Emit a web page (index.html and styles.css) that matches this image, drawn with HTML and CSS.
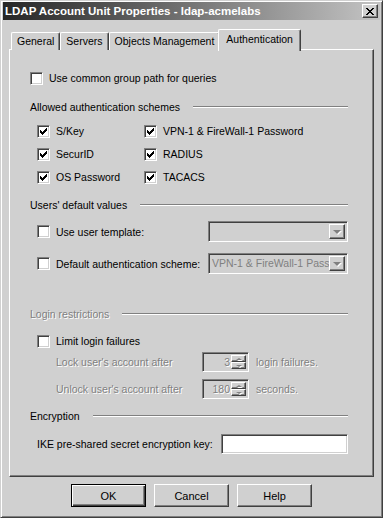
FILE: index.html
```html
<!DOCTYPE html>
<html lang="en">
<head>
    <meta charset="UTF-8">
    <title>LDAP Account Unit Properties - ldap-acmelabs</title>
    <link rel="stylesheet" href="styles.css">
</head>
<body>
    <div class="window">
        <div class="titlebar">
            <span class="title">LDAP Account Unit Properties - ldap-acmelabs</span>
            <span class="close-btn">
                <svg width="8" height="7" viewBox="0 0 8 7"><path d="M0 0h2v1h-2zM6 0h2v1h-2zM1 1h2v1h-2zM5 1h2v1h-2zM2 2h4v1h-4zM3 3h2v1h-2zM2 4h4v1h-4zM1 5h2v1h-2zM5 5h2v1h-2zM0 6h2v1h-2zM6 6h2v1h-2z" fill="#000"/></svg>
            </span>
        </div>

        <div class="content">
            <div class="tabs">
                <div class="tab">General</div>
                <div class="tab">Servers</div>
                <div class="tab">Objects Management</div>
                <div class="tab active">Authentication</div>
            </div>

            <div class="panel">
                <label class="check row-common">
                    <span class="box"></span>
                    <span>Use common group path for queries</span>
                </label>

                <div class="group-head head-allowed">
                    <span>Allowed authentication schemes</span>
                    <span class="etch"></span>
                </div>
                <div class="schemes">
                    <label class="check"><span class="box checked"></span><span>S/Key</span></label>
                    <label class="check"><span class="box checked"></span><span>VPN-1 &amp; FireWall-1 Password</span></label>
                    <label class="check"><span class="box checked"></span><span>SecurID</span></label>
                    <label class="check"><span class="box checked"></span><span>RADIUS</span></label>
                    <label class="check"><span class="box checked"></span><span>OS Password</span></label>
                    <label class="check"><span class="box checked"></span><span>TACACS</span></label>
                </div>

                <div class="group-head head-users">
                    <span>Users' default values</span>
                    <span class="etch"></span>
                </div>
                <div class="field-row row-template">
                    <label class="check"><span class="box"></span><span>Use user template:</span></label>
                    <div class="combo">
                        <span class="combo-text"></span>
                        <span class="combo-btn"><span class="arrow-down"></span></span>
                    </div>
                </div>
                <div class="field-row row-scheme">
                    <label class="check"><span class="box"></span><span>Default authentication scheme:</span></label>
                    <div class="combo">
                        <span class="combo-text">VPN-1 &amp; FireWall-1 Pass</span>
                        <span class="combo-btn"><span class="arrow-down"></span></span>
                    </div>
                </div>

                <div class="group-head head-login disabled">
                    <span>Login restrictions</span>
                    <span class="etch"></span>
                </div>
                <label class="check row-limit"><span class="box"></span><span>Limit login failures</span></label>
                <div class="spin-row row-lock disabled">
                    <span>Lock user's account after</span>
                    <div class="spin">
                        <span class="spin-value">3</span>
                        <span class="spin-btns">
                            <span class="spin-btn"><span class="arrow-up"></span></span>
                            <span class="spin-btn"><span class="arrow-down small"></span></span>
                        </span>
                    </div>
                    <span>login failures.</span>
                </div>
                <div class="spin-row row-unlock disabled">
                    <span>Unlock user's account after</span>
                    <div class="spin">
                        <span class="spin-value">180</span>
                        <span class="spin-btns">
                            <span class="spin-btn"><span class="arrow-up"></span></span>
                            <span class="spin-btn"><span class="arrow-down small"></span></span>
                        </span>
                    </div>
                    <span>seconds.</span>
                </div>

                <div class="group-head head-enc">
                    <span>Encryption</span>
                    <span class="etch"></span>
                </div>
                <div class="field-row row-ike">
                    <span class="ike-label">IKE pre-shared secret encryption key:</span>
                    <input type="text" class="textbox">
                </div>
            </div>

            <div class="buttons">
                <button type="button" class="btn default">OK</button>
                <button type="button" class="btn">Cancel</button>
                <button type="button" class="btn">Help</button>
            </div>
        </div>
    </div>
</body>
</html>
```

FILE: styles.css
```css
* {
    margin: 0;
    padding: 0;
    box-sizing: border-box;
}

body {
    font-family: "Liberation Sans", Arial, sans-serif;
    font-size: 10.5px;
    color: #000;
    background: #d0d0d0;
}

.window {
    width: 383px;
    height: 518px;
    background: #d0d0d0;
    border: 1px solid;
    border-color: #d0d0d0 #404040 #404040 #d0d0d0;
    box-shadow: inset 1px 1px #fff, inset -1px -1px #808080;
    padding: 1px 2px 2px 2px;
}

/* title bar */
.titlebar {
    height: 18px;
    display: flex;
    align-items: center;
    justify-content: space-between;
    padding: 0 2px 0 2px;
    background: linear-gradient(to right, #262626, #c4c4c4);
}

.title {
    color: #fff;
    font-weight: bold;
    font-size: 11.5px;
}

.close-btn {
    width: 16px;
    height: 14px;
    display: flex;
    align-items: center;
    justify-content: center;
    background: #d0d0d0;
    border: 1px solid;
    border-color: #fff #404040 #404040 #fff;
    box-shadow: inset -1px -1px #808080;
    padding-right: 1px;
}

.content {
    padding: 9px 6px 0 6px;
}

/* tabs */
.tabs {
    display: flex;
    align-items: flex-end;
    height: 21px;
    padding-left: 2px;
    position: relative;
    z-index: 1;
}

.tab {
    height: 18px;
    padding: 2px 5px 0 5px;
    border: 1px solid;
    border-bottom: none;
    border-color: #fff #404040 #404040 #fff;
    border-radius: 2px 2px 0 0;
    box-shadow: inset -1px 0 #808080;
    background: #d0d0d0;
    white-space: nowrap;
}

.tab.active {
    height: 22px;
    margin: 0 -2px -1px -2px;
    padding: 3px 7px 0 7px;
    position: relative;
}

.panel {
    height: 428px;
    margin-top: -1px;
    border: 1px solid;
    border-color: #fff #404040 #404040 #fff;
    box-shadow: inset -1px -1px #808080;
    padding: 18px 25px 0 20px;
    display: flex;
    flex-direction: column;
}

/* checkboxes */
.check {
    display: flex;
    align-items: center;
    gap: 6px;
    height: 20px;
    white-space: nowrap;
}

.box {
    width: 13px;
    height: 13px;
    flex: none;
    background: #fff;
    border: 1px solid;
    border-color: #808080 #fff #fff #808080;
    box-shadow: inset 1px 1px #404040, inset -1px -1px #d0d0d0;
}

.box.checked {
    background: #fff url("data:image/svg+xml,%3Csvg xmlns='http://www.w3.org/2000/svg' width='7' height='7' viewBox='0 0 7 7'%3E%3Cpath d='M6 0h1v1h-1zM5 1h2v1h-2zM0 2h1v1h-1zM4 2h3v1h-3zM0 3h2v1h-2zM3 3h3v1h-3zM0 4h5v1h-5zM1 5h3v1h-3zM2 6h1v1h-1z' fill='%23000'/%3E%3C/svg%3E") no-repeat 2px 2px;
}

/* group headings */
.group-head {
    display: flex;
    align-items: center;
    height: 20px;
    gap: 13px;
    white-space: nowrap;
}

.etch {
    flex: 1;
    height: 2px;
    border-top: 1px solid #808080;
    border-bottom: 1px solid #fff;
}

.disabled {
    color: #808080;
    text-shadow: 1px 1px #fff;
}

.head-allowed { margin-top: 9px; }
.head-users { margin-top: 8px; }
.head-login { margin-top: 30px; }
.head-enc { margin-top: 7px; }

.schemes {
    margin-top: 4px;
    margin-left: 7px;
    display: grid;
    grid-template-columns: 107px auto;
    row-gap: 3px;
}

/* combo rows */
.field-row {
    display: flex;
    align-items: center;
    justify-content: space-between;
    margin-left: 7px;
    white-space: nowrap;
}

.row-template { margin-top: 6px; height: 21px; }
.row-scheme { margin-top: 11px; height: 21px; }

.combo {
    width: 140px;
    height: 21px;
    display: flex;
    border: 1px solid;
    border-color: #808080 #fff #fff #808080;
    box-shadow: inset 1px 1px #404040, inset -1px -1px #d0d0d0;
    padding: 2px;
    background: #d0d0d0;
}

.combo-text {
    flex: 1;
    white-space: nowrap;
    color: #808080;
    padding-left: 1px;
    line-height: 15px;
}

.combo-btn {
    width: 16px;
    height: 15px;
    flex: none;
    display: flex;
    align-items: center;
    justify-content: center;
    border: 1px solid;
    border-color: #fff #404040 #404040 #fff;
    box-shadow: inset -1px -1px #808080;
}

.arrow-down {
    width: 0;
    height: 0;
    border-left: 4px solid transparent;
    border-right: 4px solid transparent;
    border-top: 4px solid #808080;
    filter: drop-shadow(1px 1px 0 #fff);
}

.arrow-down.small,
.arrow-up {
    border-left-width: 3px;
    border-right-width: 3px;
}

.arrow-down.small {
    border-top-width: 2px;
}

.arrow-up {
    width: 0;
    height: 0;
    border-left: 3px solid transparent;
    border-right: 3px solid transparent;
    border-bottom: 2px solid #808080;
    filter: drop-shadow(1px 1px 0 #fff);
}

/* login restrictions */
.row-limit { margin-top: 7px; margin-left: 7px; }

.spin-row {
    display: grid;
    grid-template-columns: 139px 47px auto;
    column-gap: 7px;
    align-items: center;
    height: 20px;
    margin-left: 26px;
    white-space: nowrap;
}

.row-lock { margin-top: 1px; }
.row-unlock { margin-top: 7px; }

.spin {
    height: 20px;
    display: flex;
    border: 1px solid;
    border-color: #808080 #fff #fff #808080;
    box-shadow: inset 1px 1px #404040, inset -1px -1px #d0d0d0;
    padding: 2px;
}

.spin-value {
    flex: 1;
    text-align: right;
    padding-right: 1px;
    line-height: 14px;
}

.spin-btns {
    width: 15px;
    display: flex;
    flex-direction: column;
}

.spin-btn {
    flex: 1;
    display: flex;
    align-items: center;
    justify-content: center;
    border: 1px solid;
    border-color: #fff #404040 #404040 #fff;
    box-shadow: inset -1px -1px #808080;
}

/* encryption */
.row-ike { margin-top: 8px; height: 20px; }

.textbox {
    width: 127px;
    height: 20px;
    background: #fff;
    border: 1px solid;
    border-color: #808080 #fff #fff #808080;
    box-shadow: inset 1px 1px #404040, inset -1px -1px #d0d0d0;
    outline: none;
}

/* dialog buttons */
.buttons {
    display: flex;
    justify-content: center;
    gap: 8px;
    margin-top: 7px;
}

.btn {
    width: 75px;
    height: 23px;
    font-family: inherit;
    font-size: 11px;
    color: #000;
    background: #d0d0d0;
    border: 1px solid;
    border-color: #fff #404040 #404040 #fff;
    box-shadow: inset -1px -1px #808080;
}

.btn.default {
    border: 1px solid #000;
    box-shadow: inset 1px 1px #fff, inset -1px -1px #404040, inset -2px -2px #808080;
}
```
